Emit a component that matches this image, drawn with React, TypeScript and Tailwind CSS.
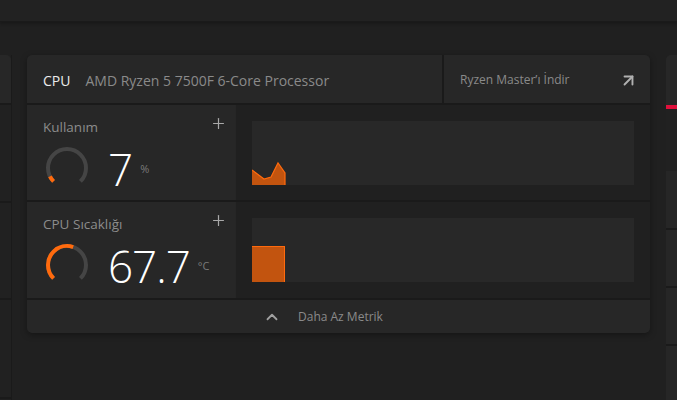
import { ChevronUp, Plus, ArrowUpRight } from 'lucide-react'

const font = { fontFamily: '"Open Sans", "Noto Sans", sans-serif' }

const Gauge = ({ percent }: { percent: number }) => (
  <svg width="46" height="46" viewBox="0 0 46 46" className="shrink-0">
    <path
      d="M 9.565 36.435 A 19 19 0 1 1 36.435 36.435"
      fill="none"
      stroke="#454545"
      strokeWidth="4"
    />
    <path
      d="M 9.565 36.435 A 19 19 0 1 1 36.435 36.435"
      fill="none"
      stroke="#ff6a0d"
      strokeWidth="4"
      pathLength={100}
      strokeDasharray={`${percent} 200`}
    />
  </svg>
)

const MetricRow = ({
  label,
  value,
  unit,
  percent,
  chart,
  rowHeight,
}: {
  label: string
  value: string
  unit: string
  percent: number
  chart: React.ReactNode
  rowHeight: string
}) => (
  <div className={`flex ${rowHeight}`}>
    <div className="w-[208px] bg-[#272727] pl-4 pr-[8px] pt-[12px]">
      <div className="flex items-start justify-between">
        <span className="text-[13.5px] text-[#8c8c8c]">{label}</span>
        <Plus size={17} strokeWidth={1.7} className="mt-[-2px] text-[#a9a9a9]" />
      </div>
      <div className="mt-[8px] flex items-start">
        <div className="ml-[1px]">
          <Gauge percent={percent} />
        </div>
        <span className="ml-[18px] mt-[2px] text-[44px] font-light leading-none tracking-[-1px] text-white">
          {value}
        </span>
        <span className="ml-[8px] mt-[16px] text-[11px] text-[#7a7a7a]">{unit}</span>
      </div>
    </div>
    <div className="flex flex-1 items-center border-l-[1px] border-[#262626] bg-[#202020] pl-[16px] pr-[16px]">
      <div className="relative h-[64px] w-full bg-[#282828]">{chart}</div>
    </div>
  </div>
)

export default function App() {
  return (
    <div style={font} className="h-[400px] w-[677px] overflow-hidden bg-[#202020]">
      <div className="h-[22px] border-b-[1px] border-[#1a1a1a] bg-[#222222] shadow-[0_2px_3px_rgba(0,0,0,0.25)]" />
      <div className="mt-[33px] flex">
        {/* left partial panel */}
        <div className="flex h-[400px] w-[12px] flex-col border-r-[1px] border-[#1a1a1a]">
          <div className="h-[48px] rounded-tr-[5px] bg-[#272727]" />
          <div className="h-[2px] bg-[#1a1a1a]" />
          <div className="h-[96px] bg-[#212121]" />
          <div className="h-[2px] bg-[#1a1a1a]" />
          <div className="h-[95px] bg-[#212121]" />
          <div className="h-[2px] bg-[#1a1a1a]" />
          <div className="h-[97px] bg-[#212121]" />
          <div className="h-[2px] bg-[#1a1a1a]" />
        </div>

        {/* main card */}
        <div className="ml-[15px] flex h-[278px] w-[623px] flex-col overflow-hidden rounded-[5px] bg-[#1a1a1a] shadow-[0_2px_6px_rgba(0,0,0,0.35)]">
          <div className="flex h-[48px] shrink-0">
            <div className="flex w-[415px] items-center bg-[#272727] pl-4 pt-[2px]">
              <span className="text-[14px] text-[#ececec]">CPU</span>
              <span className="ml-[15px] text-[14px] text-[#8a8a8a]">AMD Ryzen 5 7500F 6-Core Processor</span>
            </div>
            <div className="ml-[2px] flex flex-1 items-center justify-between bg-[#272727] pl-4 pr-[12px] pt-[2px]">
              <span className="text-[12px] text-[#8a8a8a]">Ryzen Master’ı İndir</span>
              <ArrowUpRight size={19} strokeWidth={2.4} className="text-[#b0b0b0]" />
            </div>
          </div>
          <div className="mt-[2px]">
            <MetricRow
              label="Kullanım"
              value="7"
              unit="%"
              percent={7}
              rowHeight="h-[95px]"
              chart={
                <svg width="40" height="64" className="absolute left-0 top-0">
                  <path d="M0 49 L12 58 L19 56 L26 42 L33 52 L33 64 L0 64 Z" fill="#c2540f" />
                  <path d="M0 49 L12 58 L19 56 L26 42 L33 52 L33 64" fill="none" stroke="#ff6a0d" strokeWidth="1.2" />
                </svg>
              }
            />
          </div>
          <div className="mt-[2px]">
            <MetricRow
              label="CPU Sıcaklığı"
              value="67.7"
              unit="°C"
              percent={57}
              rowHeight="h-[96px]"
              chart={
                <div className="absolute bottom-0 left-0 h-[36px] w-[33px] border-t-[1px] border-r-[1px] border-[#ff6a0d] bg-[#c2540f]" />
              }
            />
          </div>
          <div className="mt-[2px] flex h-[33px] items-center bg-[#272727] pl-[236px]">
            <ChevronUp size={18} strokeWidth={2.4} className="text-[#a0a0a0]" />
            <span className="ml-[17px] text-[12px] font-medium text-[#8a8a8a]">Daha Az Metrik</span>
          </div>
        </div>

        {/* right partial panel */}
        <div className="ml-[16px] flex h-[400px] flex-1 flex-col">
          <div className="h-[50px] rounded-tl-[5px] bg-[#272727]" />
          <div className="h-[4px] bg-[#e0103c]" />
          <div className="h-[62px] bg-[#212121]" />
          <div className="h-[57px] bg-[#262626]" />
          <div className="h-[2px] bg-[#1a1a1a]" />
          <div className="h-[56px] bg-[#262626]" />
          <div className="h-[2px] bg-[#1a1a1a]" />
          <div className="h-[56px] bg-[#262626]" />
          <div className="h-[2px] bg-[#1a1a1a]" />
          <div className="h-[60px] bg-[#262626]" />
        </div>
      </div>
    </div>
  )
}
